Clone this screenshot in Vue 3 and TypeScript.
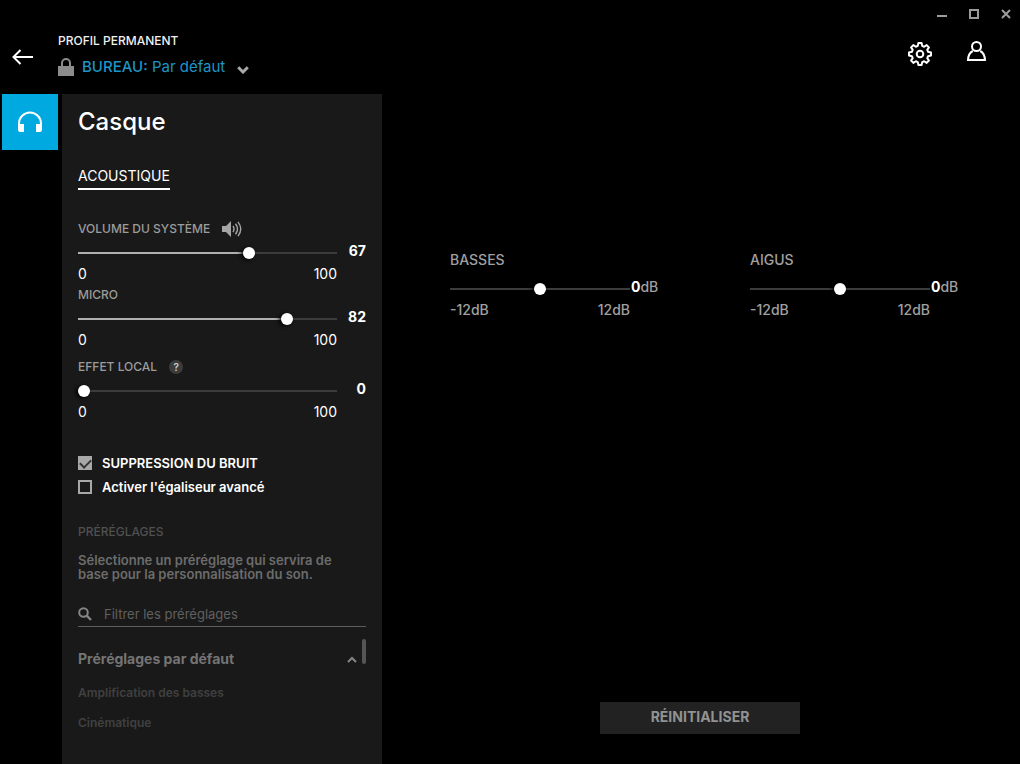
<script setup lang="ts">
import { computed, reactive, ref } from 'vue'

interface Level {
  id: string
  label: string
  value: number
  min: number
  max: number
}

const levels = reactive<Level[]>([
  { id: 'volume', label: 'VOLUME DU SYSTÈME', value: 67, min: 0, max: 100 },
  { id: 'micro', label: 'MICRO', value: 82, min: 0, max: 100 },
  { id: 'sidetone', label: 'EFFET LOCAL', value: 0, min: 0, max: 100 },
])

const tones = reactive<Level[]>([
  { id: 'bass', label: 'BASSES', value: 0, min: -12, max: 12 },
  { id: 'treble', label: 'AIGUS', value: 0, min: -12, max: 12 },
])

const noiseRemoval = ref(true)
const advancedEq = ref(false)
const filter = ref('')
const groupOpen = ref(true)
const presets = ['Amplification des basses', 'Cinématique']

const visiblePresets = computed(() =>
  presets.filter((p) => p.toLowerCase().includes(filter.value.toLowerCase())),
)

function resetTones(): void {
  tones.forEach((t) => (t.value = 0))
}
</script>

<template>
  <div class="window">
    <header class="top">
      <button class="icon-btn back" aria-label="Retour">
        <svg width="22" height="16" viewBox="0 0 22 16" fill="none" stroke="#fff" stroke-width="2">
          <path d="M21 8H1.5M8.500 1 1.500 8l7 7" />
        </svg>
      </button>
      <div class="profile">
        <span class="profile-title">PROFIL PERMANENT</span>
        <button class="profile-picker" aria-haspopup="listbox">
          <svg width="16" height="18" viewBox="0 0 16 18">
            <path d="M4 9V5a4 4 0 0 1 8 0v4" fill="none" stroke="#8c8c8c" stroke-width="2" />
            <path d="M0 8h16v10H0z" fill="#8c8c8c" />
          </svg>
          <span class="profile-name"><b>BUREAU:</b> Par défaut</span>
          <svg class="caret" width="12" height="8" viewBox="0 0 12 8" fill="none" stroke="#a8a8a8" stroke-width="3">
            <path d="M1.200 1.200 6 6l4.800-4.800" />
          </svg>
        </button>
      </div>
      <div class="top-right">
        <div class="window-controls">
          <button class="icon-btn" aria-label="Réduire">
            <svg width="10" height="10" viewBox="0 0 10 10"><path d="M0 6h10v2H0z" fill="#9c9c9c" /></svg>
          </button>
          <button class="icon-btn" aria-label="Agrandir">
            <svg width="10" height="10" viewBox="0 0 10 10"><path d="M1 1h8v8H1z" fill="none" stroke="#9c9c9c" stroke-width="2" /></svg>
          </button>
          <button class="icon-btn" aria-label="Fermer">
            <svg width="10" height="10" viewBox="0 0 10 10"><path d="M1 1l8 8M9 1 1 9" stroke="#9c9c9c" stroke-width="2" /></svg>
          </button>
        </div>
        <div class="actions">
          <button class="icon-btn" aria-label="Paramètres">
            <svg width="26" height="26" viewBox="0 0 26 26" fill="none" stroke="#fff" stroke-width="2" stroke-linejoin="round">
              <path
                d="M11.400 2H14.600L15.200 4.900L17.170 5.720L19.650 4.090L21.910 6.350L20.280 8.830L21.100 10.800L24 11.400V14.600L21.100 15.200L20.280 17.170L21.910 19.650L19.650 21.910L17.170 20.280L15.200 21.100L14.600 24H11.400L10.800 21.100L8.830 20.280L6.350 21.910L4.090 19.650L5.720 17.170L4.900 15.200L2 14.600V11.400L4.900 10.800L5.720 8.830L4.090 6.350L6.350 4.090L8.830 5.720L10.800 4.900Z"
              />
              <circle cx="13" cy="13" r="3.300" />
            </svg>
          </button>
          <button class="icon-btn" aria-label="Compte">
            <svg width="19" height="20" viewBox="0 0 19 20" fill="none" stroke="#fff" stroke-width="2">
              <circle cx="9.500" cy="5.500" r="4.500" />
              <path d="M5.800 10C3 11.500 1.200 15 1 19h17c-.2-4-2-7.500-4.800-9" />
            </svg>
          </button>
        </div>
      </div>
    </header>

    <div class="body">
      <nav class="rail">
        <button class="rail-item" aria-label="Casque">
          <svg width="26" height="24" viewBox="0 0 26 24">
            <path d="M2 15v-1.500a11 11 0 0 1 22 0V15" fill="none" stroke="#fff" stroke-width="2" />
            <path d="M1 14h6v8H2.500L1 20.500zM19 14h6v6.500L23.500 22H19z" fill="#fff" />
          </svg>
        </button>
      </nav>

      <aside class="panel">
        <h1>Casque</h1>
        <a class="tab" href="#acoustique">ACOUSTIQUE</a>

        <div class="levels">
          <div v-for="l in levels" :key="l.id" class="level" :class="l.id">
            <div class="level-head">
              <label :for="l.id">{{ l.label }}</label>
              <button v-if="l.id === 'volume'" class="icon-btn" aria-label="Couper le son">
                <svg width="20" height="16" viewBox="0 0 20 16">
                  <path d="M0 5h4l5-5v16l-5-5H0z" fill="#a5a5a5" />
                  <path d="M11 5q2 3 0 6M13.500 2.800q4 5.200 0 10.400M16 .8q5.500 7.200 0 14.400" fill="none" stroke="#a5a5a5" stroke-width="1.400" />
                </svg>
              </button>
              <button v-if="l.id === 'sidetone'" class="help" aria-label="Aide">?</button>
            </div>
            <div class="track-row">
              <input
                :id="l.id"
                v-model.number="l.value"
                type="range"
                :min="l.min"
                :max="l.max"
                :style="{ '--fill': l.value + '%' }"
              />
              <output :for="l.id">{{ l.value }}</output>
            </div>
            <div class="scale"><span>{{ l.min }}</span><span>{{ l.max }}</span></div>
          </div>
        </div>

        <div class="options">
          <label><input v-model="noiseRemoval" type="checkbox" /><span>SUPPRESSION DU BRUIT</span></label>
          <label><input v-model="advancedEq" type="checkbox" /><span>Activer l'égaliseur avancé</span></label>
        </div>

        <h2>PRÉRÉGLAGES</h2>
        <p class="hint">Sélectionne un préréglage qui servira de base pour la personnalisation du son.</p>

        <div class="search">
          <svg width="14" height="14" viewBox="0 0 14 14" fill="none" stroke="#858585" stroke-width="2">
            <circle cx="5.500" cy="5.500" r="4.300" />
            <path d="M8.700 8.700 13 13" stroke-width="2.400" />
          </svg>
          <input v-model="filter" type="text" placeholder="Filtrer les préréglages" aria-label="Filtrer les préréglages" />
        </div>

        <div class="preset-list">
          <button class="group" :aria-expanded="groupOpen" @click="groupOpen = !groupOpen">
            <span>Préréglages par défaut</span>
            <svg width="10" height="7" viewBox="0 0 10 7" fill="none" stroke="#858585" stroke-width="2">
              <path d="M1 6l4-4 4 4" />
            </svg>
          </button>
          <ul v-if="groupOpen">
            <li v-for="p in visiblePresets" :key="p"><button>{{ p }}</button></li>
          </ul>
          <span class="scroll-thumb"></span>
        </div>
      </aside>

      <main class="stage">
        <div class="tones">
          <div v-for="t in tones" :key="t.id" class="tone">
            <label :for="t.id">{{ t.label }}</label>
            <div class="track-row">
              <input :id="t.id" v-model.number="t.value" type="range" :min="t.min" :max="t.max" />
              <output :for="t.id"><b>{{ t.value }}</b>dB</output>
            </div>
            <div class="scale"><span>{{ t.min }}dB</span><span>{{ t.max }}dB</span></div>
          </div>
        </div>
        <button class="reset" @click="resetTones">RÉINITIALISER</button>
      </main>
    </div>
  </div>
</template>

<style>
body {
  margin: 0;
  background: #000;
}
</style>

<style scoped>
* {
  box-sizing: border-box;
}
.window {
  min-height: 100vh;
  display: flex;
  flex-direction: column;
  background: #000;
  color: #fff;
  font-family: Inter, Roboto, sans-serif;
  font-size: 13px;
  line-height: 16px;
}
button {
  padding: 0;
  border: 0;
  background: none;
  color: inherit;
  font: inherit;
  text-align: left;
  cursor: pointer;
}
svg {
  display: block;
  flex: none;
}
.icon-btn {
  display: grid;
  place-items: center;
}
.top {
  display: flex;
  height: 94px;
}
.back {
  width: 22px;
  height: 16px;
  margin: 49px 24px 0 12px;
}
.profile {
  padding-top: 33px;
}
.profile-title {
  display: block;
  font-size: 12px;
  font-weight: 500;
  color: #f0f0f0;
}
.profile-picker {
  display: flex;
  align-items: center;
  gap: 8px;
  height: 20px;
  margin-top: 8px;
  font-size: 15px;
  color: #1d94c6;
}
.profile-name b {
  font-weight: 500;
}
.caret {
  margin: 6px 0 0 4px;
}
.top-right {
  margin-left: auto;
  display: flex;
  flex-direction: column;
  align-items: flex-end;
}
.window-controls {
  display: flex;
  gap: 22px;
  padding: 9px 9px 0 0;
}
.actions {
  display: flex;
  align-items: flex-start;
  gap: 34px;
  padding: 22px 34px 0 0;
}
.body {
  flex: 1;
  display: flex;
}
.rail {
  width: 62px;
  padding-left: 2px;
}
.rail-item {
  display: grid;
  place-items: center;
  width: 56px;
  height: 56px;
  background: #00a9e0;
}
.panel {
  width: 320px;
  padding: 12px 16px 0;
  background: #191919;
}
h1 {
  margin: 0 0 28px;
  font-size: 24px;
  font-weight: 500;
  line-height: 32px;
}
.tab {
  display: inline-block;
  padding-bottom: 2px;
  border-bottom: 2px solid #fff;
  font-size: 14px;
  line-height: 20px;
  color: #fff;
  text-decoration: none;
}
.levels {
  padding-top: 31px;
}
.level {
  margin-bottom: 5px;
}
.level.micro {
  margin-bottom: 11px;
}
.level.sidetone {
  margin-bottom: 0;
}
.level-head {
  display: flex;
  align-items: center;
  gap: 12px;
  height: 16px;
  font-size: 12px;
  font-weight: 500;
  color: #9c9c9c;
}
.help {
  width: 14px;
  height: 14px;
  border-radius: 50%;
  background: #3c3c3c;
  color: #d0d0d0;
  font-size: 10px;
  font-weight: 600;
  line-height: 14px;
  text-align: center;
}
.track-row {
  display: grid;
  grid-template: 12px / 1fr 29px;
  align-items: center;
  margin: 10px 0 7px;
}
input[type='range'] {
  --fill: 0%;
  appearance: none;
  width: 100%;
  height: 12px;
  margin: 0;
  background: linear-gradient(90deg, #b0b0b0 var(--fill), #3c3c3c var(--fill)) center / 100% 2px no-repeat;
}
input[type='range']::-webkit-slider-thumb {
  appearance: none;
  width: 12px;
  height: 12px;
  border-radius: 50%;
  background: #fff;
  box-shadow: -2px 1px 4px #000;
}
.track-row output {
  padding-bottom: 4px;
  font-size: 14px;
  font-weight: 700;
  text-align: right;
}
.scale {
  display: flex;
  justify-content: space-between;
  padding-right: 29px;
  font-size: 14px;
}
.options {
  padding-top: 31px;
}
.options label {
  display: flex;
  align-items: center;
  gap: 10px;
  height: 24px;
  font-size: 13px;
  font-weight: 600;
}
.options input {
  appearance: none;
  width: 14px;
  height: 14px;
  margin: 0;
  border: 2px solid #a8a8a8;
  display: grid;
  place-items: center;
}
.options input:checked {
  background: #a8a8a8;
}
.options input:checked::before {
  content: '';
  width: 9px;
  height: 5px;
  margin-bottom: 2px;
  border: solid #333;
  border-width: 0 0 2px 2px;
  transform: rotate(-45deg);
}
h2 {
  margin: 25px 0 13px;
  font-size: 12px;
  font-weight: 500;
  line-height: 16px;
  color: #505050;
}
.hint {
  margin: 0;
  padding-right: 16px;
  font-size: 13px;
  font-weight: 600;
  line-height: 14px;
  color: #6c6c6c;
}
.search {
  display: flex;
  align-items: center;
  gap: 12px;
  height: 26px;
  margin-top: 20px;
  border-bottom: 1px solid #5c5c5c;
}
.search input {
  flex: 1;
  min-width: 0;
  padding: 0;
  border: 0;
  outline: 0;
  background: none;
  color: #ccc;
  font: inherit;
}
.search input::placeholder {
  color: #606060;
}
.preset-list {
  position: relative;
  margin-top: 12px;
  padding-top: 10px;
}
.group {
  display: flex;
  align-items: center;
  justify-content: space-between;
  width: 100%;
  height: 20px;
  padding-right: 9px;
  font-size: 14px;
  font-weight: 700;
  color: #747474;
}
ul {
  margin: 9px 0 0;
  padding: 0;
  list-style: none;
}
li button {
  display: block;
  width: 100%;
  font-size: 12px;
  font-weight: 600;
  line-height: 30px;
  color: #404040;
}
.scroll-thumb {
  position: absolute;
  top: 0;
  right: 0;
  width: 4px;
  height: 25px;
  border-radius: 2px;
  background: #555;
}
.stage {
  flex: 1;
  display: flex;
  flex-direction: column;
  padding: 158px 60px 30px 68px;
}
.tones {
  display: grid;
  grid-template-columns: 1fr 1fr;
  gap: 90px;
  color: #a0a0a0;
}
.tone label {
  display: block;
  font-size: 14px;
  font-weight: 500;
}
.tone .track-row {
  grid-template-columns: 1fr 30px;
  margin: 15px 0 7px;
}
.tone output {
  padding-left: 1px;
  font-weight: 500;
  text-align: left;
  white-space: nowrap;
}
.tone output b {
  color: #fff;
}
.tone .scale {
  padding-right: 30px;
  font-weight: 500;
}
.reset {
  align-self: center;
  width: 200px;
  height: 32px;
  margin: auto 10px 0 0;
  padding-bottom: 3px;
  background: #222;
  font-size: 14px;
  font-weight: 700;
  color: #929292;
  text-align: center;
}
</style>
